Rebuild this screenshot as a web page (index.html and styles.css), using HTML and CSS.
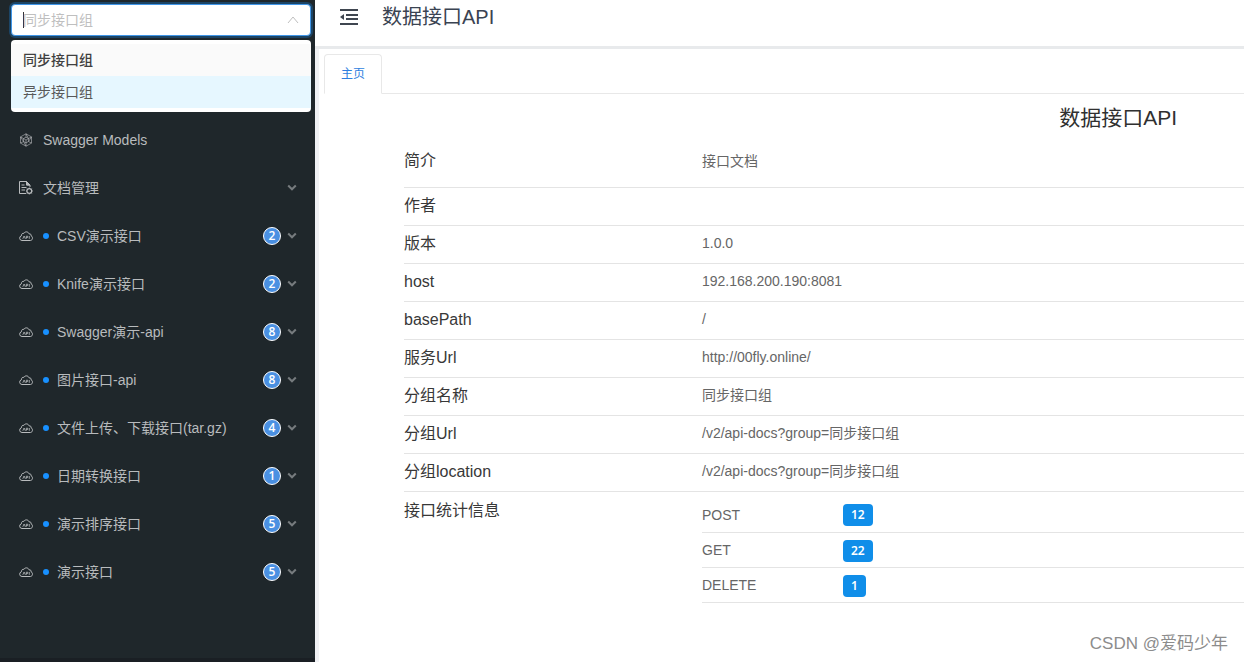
FILE: index.html
```html
<!DOCTYPE html>
<html lang="zh-CN">
<head>
<meta charset="utf-8">
<title>数据接口API</title>
<link rel="stylesheet" href="styles.css">
</head>
<body>
<svg class="sprite" aria-hidden="true">
  <symbol id="cloud" viewBox="0 0 14 14" fill="none" stroke="currentColor">
    <path d="M3 11.500a2.400 2.400 0 0 1-.6-4.700C2.400 4.900 3.500 4 4.900 4.300 6 2.300 9.300 2.300 10.200 5c1.500-.3 2.100.6 1.900 1.900 2 .8 1.800 4.300-.6 4.600z"/>
    <path d="M3.800 9.800l1.300-2.800 1.300 2.800M7.300 9.800V7.200h1.400v1.300H7.300M10.300 7v2.800" stroke-width=".8"/>
  </symbol>
  <symbol id="chevron" viewBox="0 0 10 8" fill="none" stroke="currentColor" stroke-width="2">
    <path d="M1.200 1.500L5 5.300 8.800 1.500"/>
  </symbol>
</svg>
<div class="layout">
  <aside class="sidebar">
    <div class="group-select">
      <label class="combo">
        <input class="combo-input" type="text" role="combobox" aria-label="接口分组" aria-expanded="true" aria-controls="groups" placeholder="同步接口组">
        <svg class="combo-arrow" viewBox="0 0 12 12" fill="none" stroke="currentColor"><path d="M1 9l5-6 5 6"/></svg>
      </label>
      <ul class="options" id="groups" role="listbox">
        <li class="option selected" role="option" aria-selected="true">同步接口组</li>
        <li class="option active" role="option" aria-selected="false">异步接口组</li>
      </ul>
    </div>
    <nav class="menu">
      <a class="item" href="#models">
        <svg class="icon" viewBox="0 0 14 14" fill="none" stroke="currentColor" stroke-width=".6"><path d="M7 .8l5.500 3.100v6.200L7 13.200l-5.500-3.100V3.900zM7 .8v3.400M7 13.200V9.800M1.500 3.900l3 1.600M12.500 3.900l-3 1.600M1.500 10.100l3-1.600M12.500 10.100l-3-1.600M7 4.200l2.500 1.300v3L7 9.800 4.500 8.500v-3zM4.500 5.500L7 7l2.500-1.500M7 7v2.800M1.500 3.900l3 4.600M12.500 3.900L9.500 8.500M7 .8l2.500 4.700M7 13.200L4.500 8.500"/></svg>
        <span class="text">Swagger Models</span>
      </a>
      <a class="item" href="#docs">
        <svg class="icon" viewBox="0 0 14 14" fill="none" stroke="currentColor"><path d="M7 12.500H.5V.5h7l3.500 3.500v2M7.500.5V4H11"/><path d="M7.500.5L11 4H7.500z" fill="currentColor"/><path d="M2.500 4h3M2.500 6.500h5M2.500 9h3.500"/><circle cx="10.300" cy="10" r="2.400" stroke-width="1.200"/><path d="M10.300 6.600v1M10.300 12.400v1M7 10h.9M12.700 10h1M8 7.700l.7.700M12 11.700l.7.700M12.600 7.700l-.7.700M8.600 11.700l-.7.700"/></svg>
        <span class="text">文档管理</span><svg class="chevron"><use href="#chevron"/></svg>
      </a>
      <a class="item" href="#csv"><svg class="icon"><use href="#cloud"/></svg><i class="dot"></i><span class="text">CSV演示接口</span><span class="count">2</span><svg class="chevron"><use href="#chevron"/></svg></a>
      <a class="item" href="#knife"><svg class="icon"><use href="#cloud"/></svg><i class="dot"></i><span class="text">Knife演示接口</span><span class="count">2</span><svg class="chevron"><use href="#chevron"/></svg></a>
      <a class="item" href="#swagger"><svg class="icon"><use href="#cloud"/></svg><i class="dot"></i><span class="text">Swagger演示-api</span><span class="count">8</span><svg class="chevron"><use href="#chevron"/></svg></a>
      <a class="item" href="#image"><svg class="icon"><use href="#cloud"/></svg><i class="dot"></i><span class="text">图片接口-api</span><span class="count">8</span><svg class="chevron"><use href="#chevron"/></svg></a>
      <a class="item" href="#file"><svg class="icon"><use href="#cloud"/></svg><i class="dot"></i><span class="text">文件上传、下载接口(tar.gz)</span><span class="count">4</span><svg class="chevron"><use href="#chevron"/></svg></a>
      <a class="item" href="#date"><svg class="icon"><use href="#cloud"/></svg><i class="dot"></i><span class="text">日期转换接口</span><span class="count">1</span><svg class="chevron"><use href="#chevron"/></svg></a>
      <a class="item" href="#sort"><svg class="icon"><use href="#cloud"/></svg><i class="dot"></i><span class="text">演示排序接口</span><span class="count">5</span><svg class="chevron"><use href="#chevron"/></svg></a>
      <a class="item" href="#demo"><svg class="icon"><use href="#cloud"/></svg><i class="dot"></i><span class="text">演示接口</span><span class="count">5</span><svg class="chevron"><use href="#chevron"/></svg></a>
    </nav>
  </aside>
  <div class="page">
    <header class="header">
      <button class="fold" type="button" aria-label="收起菜单">
        <svg class="fold-icon" viewBox="0 0 18 16" fill="none" stroke="currentColor" stroke-width="2"><path d="M0 1h18M6 6h12M6 10h12M0 15h18"/><path d="M0 8l4-3v6z" fill="currentColor" stroke="none"/></svg>
      </button>
      <span class="brand">数据接口API</span>
    </header>
    <div class="body">
      <div class="tabs" role="tablist"><button class="tab" type="button" role="tab" aria-selected="true">主页</button></div>
      <main class="content">
        <h1 class="title">数据接口API</h1>
        <table class="info">
          <tr class="intro"><th scope="row">简介</th><td>接口文档</td></tr>
          <tr><th scope="row">作者</th><td></td></tr>
          <tr><th scope="row">版本</th><td>1.0.0</td></tr>
          <tr><th scope="row">host</th><td>192.168.200.190:8081</td></tr>
          <tr><th scope="row">basePath</th><td>/</td></tr>
          <tr><th scope="row">服务Url</th><td>http://00fly.online/</td></tr>
          <tr><th scope="row">分组名称</th><td>同步接口组</td></tr>
          <tr><th scope="row">分组Url</th><td>/v2/api-docs?group=同步接口组</td></tr>
          <tr><th scope="row">分组location</th><td>/v2/api-docs?group=同步接口组</td></tr>
          <tr class="summary"><th scope="row">接口统计信息</th><td>
            <table class="stats">
              <tr><td class="method">POST</td><td><span class="tag">12</span></td></tr>
              <tr><td class="method">GET</td><td><span class="tag">22</span></td></tr>
              <tr><td class="method">DELETE</td><td><span class="tag">1</span></td></tr>
            </table>
          </td></tr>
        </table>
      </main>
      <footer class="credit">CSDN @爱码少年</footer>
    </div>
  </div>
</div>
</body>
</html>
```
FILE: styles.css
```css
* { box-sizing: border-box; }
body {
  margin: 0;
  font: 14px/20px "Liberation Sans", "Noto Sans CJK SC", sans-serif;
  color: #666;
  background: #fff;
}
button, input { font: inherit; }
.sprite { display: none; }
.layout { display: flex; min-height: 100vh; }

.sidebar {
  flex: 0 0 315px;
  background: #1f272b;
  border-bottom: 4px solid #1a1f24;
}
.group-select { position: relative; height: 116px; padding: 4px 4px 0 11px; }
.combo {
  display: flex;
  align-items: center;
  height: 32px;
  padding: 0 11px;
  background: #fff;
  border: 1px solid #4096e8;
  border-radius: 4px;
  box-shadow: 0 0 0 2px #1c4566;
}
.combo::before { content: ""; width: 1px; height: 16px; margin-right: -1px; background: #333; }
.combo-input {
  flex: 1;
  min-width: 0;
  padding: 0;
  border: 0;
  outline: 0;
  background: none;
  color: #333;
}
.combo-input::placeholder { color: #bfbfbf; opacity: 1; }
.combo-arrow { width: 12px; height: 12px; color: #bfbfbf; }
.options {
  position: absolute;
  top: 40px;
  left: 11px;
  right: 4px;
  margin: 0;
  padding: 4px 0;
  list-style: none;
  background: #fff;
  border-radius: 4px;
  overflow: hidden;
}
.option { padding: 6px 12px; color: #595959; }
.option.selected { background: #fafafa; color: #404040; font-weight: 500; }
.option.active { background: #e6f7ff; }

.item {
  display: flex;
  align-items: center;
  height: 48px;
  padding: 0 18px 0 19px;
  color: #b8bbbd;
  text-decoration: none;
}
.icon { width: 14px; height: 14px; margin-right: 10px; }
.dot { width: 6px; height: 6px; margin-right: 8px; border-radius: 50%; background: #1890ff; }
.text { flex: 1; white-space: nowrap; }
.count {
  width: 18px;
  height: 18px;
  border: 1px solid #fff;
  border-radius: 50%;
  background: #4a90e2;
  color: #fff;
  font: 600 12px/16px "Open Sans", "Noto Sans", sans-serif;
  text-align: center;
}
.chevron { width: 10px; height: 8px; margin-left: 6px; color: #767b7e; }

.page { flex: 1; min-width: 0; display: flex; flex-direction: column; }
.header {
  display: flex;
  align-items: center;
  height: 49px;
  padding: 0 25px 12px;
  border-bottom: 3px solid #e8eaec;
}
.fold { display: flex; padding: 0; border: 0; background: none; color: #3f4650; }
.fold-icon { width: 18px; height: 16px; }
.brand { margin-left: 24px; font-size: 20px; line-height: 32px; color: #3a4352; }

.body {
  flex: 1;
  display: flex;
  flex-direction: column;
  padding: 5px 0 8px 5px;
  border-left: 4px solid #f0f1f4;
}
.tabs { display: flex; height: 40px; border-bottom: 1px solid #e8e8e8; }
.tab {
  height: 40px;
  padding: 0 16px;
  border: 1px solid #e8e8e8;
  border-bottom-color: #fff;
  border-radius: 4px 4px 0 0;
  background: #fff;
  color: #2f7fe0;
  font-size: 12px;
}
.content { flex: 1; padding-left: 80px; }
.title {
  margin: 0;
  padding: 8px 67px 0 0;
  font-size: 21px;
  font-weight: 400;
  line-height: 32px;
  text-align: right;
  color: #303030;
}
.info { width: 100%; margin-top: 7px; border-collapse: collapse; table-layout: fixed; }
.info th, .info td {
  height: 38px;
  padding: 0 0 1px;
  border-bottom: 1px solid #e4e4e4;
  text-align: left;
}
.info td { padding-bottom: 3px; }
.info th { width: 298px; font-size: 16px; font-weight: 400; color: #383838; }
.info .intro th, .info .intro td { height: 46px; padding-bottom: 6px; }
.info .summary > th, .info .summary > td { padding: 0; border: 0; vertical-align: top; }
.info .summary > th { padding-top: 9px; }
.info .summary > td { padding-top: 6px; }
.stats { width: 100%; border-collapse: collapse; table-layout: fixed; }
.info .stats td { height: 35px; padding: 1px 0 0; }
.info .stats .method { width: 141px; padding: 0; }
.tag {
  display: block;
  width: fit-content;
  padding: 0 8px;
  border-radius: 4px;
  background: #108ee9;
  color: #fff;
  font: 600 12px/22px "Noto Sans", sans-serif;
}
.credit { padding-right: 16px; font-size: 17px; text-align: right; color: #8c8c8c; }
```
